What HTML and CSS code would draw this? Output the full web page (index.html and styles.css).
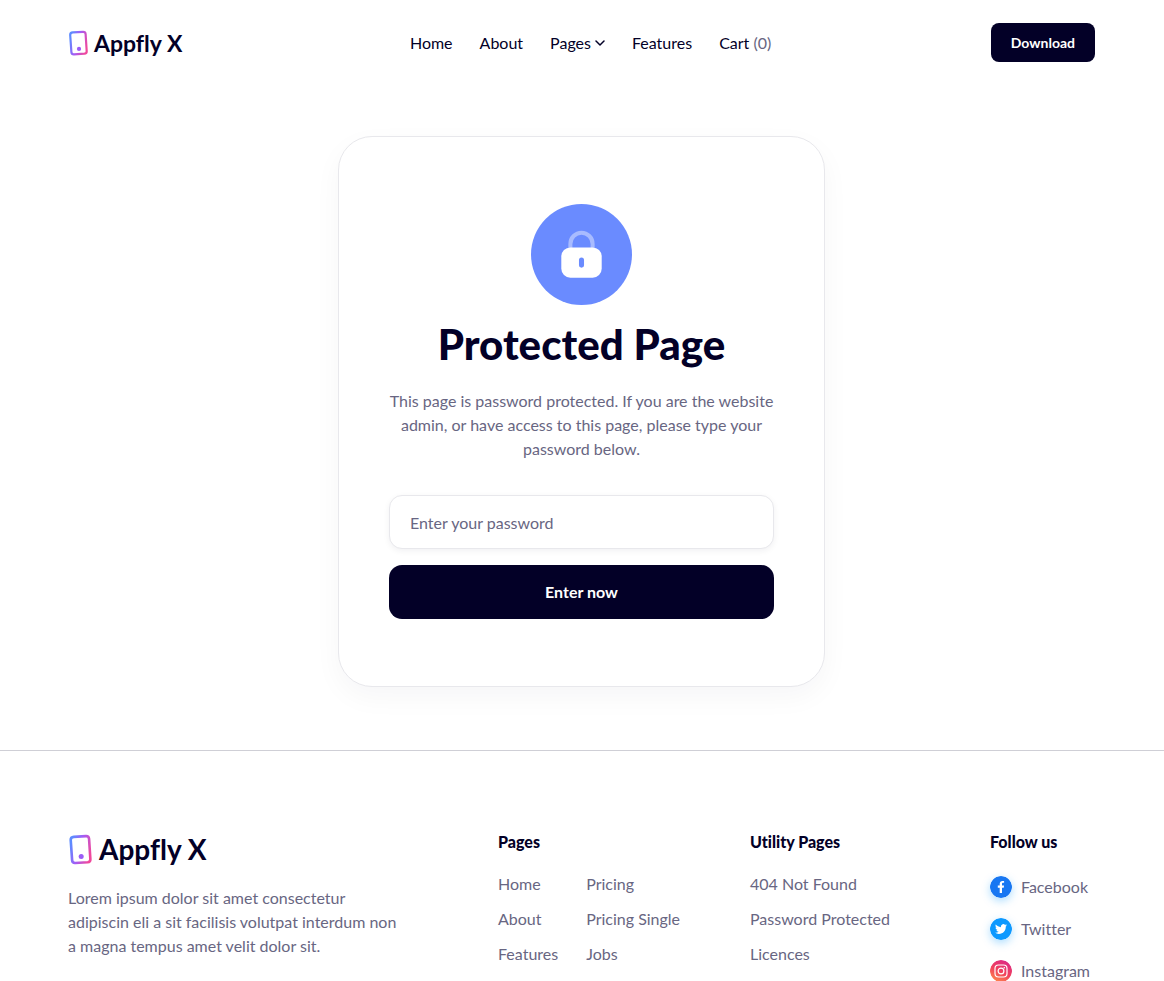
FILE: index.html
```html
<!DOCTYPE html>
<html lang="en">
<head>
<meta charset="utf-8">
<meta name="viewport" content="width=device-width, initial-scale=1">
<title>Protected Page - Appfly X</title>
<link rel="stylesheet" href="styles.css">
</head>
<body>
<header class="header">
  <a class="brand" href="#">
    <svg class="brand-icon" viewBox="0 0 20 26" aria-hidden="true">
      <defs>
        <linearGradient id="brand-gradient" x1="0" y1="0.3" x2="1" y2="0.7">
          <stop offset="0" stop-color="#5d8bff"/>
          <stop offset="0.45" stop-color="#a45cf5"/>
          <stop offset="1" stop-color="#f0489c"/>
        </linearGradient>
      </defs>
      <path d="M4.8 2.4 15 1.8Q17.4 1.7 17.6 4L18.7 21.2Q18.8 23.5 16.4 23.7L6 24.3Q3.6 24.4 3.4 22.1L2.2 5Q2.1 2.6 4.8 2.4Z" fill="none" stroke="url(#brand-gradient)" stroke-width="2.2"/>
      <circle cx="11" cy="18.9" r="2.1" fill="#9b5cf6"/>
    </svg>
    <span>Appfly X</span>
  </a>
  <nav class="nav" aria-label="Main">
    <a href="#">Home</a>
    <a href="#">About</a>
    <a class="nav-menu" href="#">Pages
      <svg class="chevron" viewBox="0 0 10 10" aria-hidden="true"><path d="M1 3l4 4 4-4" fill="none" stroke="currentColor" stroke-width="1.5" stroke-linecap="round" stroke-linejoin="round"/></svg>
    </a>
    <a href="#">Features</a>
    <a href="#">Cart <span class="count">(0)</span></a>
  </nav>
  <a class="download" href="#">Download</a>
</header>

<main class="main">
  <form class="card">
    <svg class="lock" viewBox="0 0 100 100" aria-hidden="true">
      <circle cx="50" cy="50" r="50" fill="#6a8bff"/>
      <path d="M39 44V39.5a11 11 0 0 1 22 0V44" fill="none" stroke="#a8bbff" stroke-width="4"/>
      <rect x="30" y="43" width="40" height="30" rx="9" fill="#fff"/>
      <rect x="47.5" y="53" width="5" height="10" rx="2.5" fill="#6a8bff"/>
    </svg>
    <h1 class="title">Protected Page</h1>
    <p class="message">This page is password protected. If you are the website admin, or have access to this page, please type your password below.</p>
    <input class="field" type="password" placeholder="Enter your password" aria-label="Password">
    <button class="submit" type="submit">Enter now</button>
  </form>
</main>

<footer class="footer">
  <div class="about">
    <a class="brand brand-large" href="#">
      <svg class="brand-icon" viewBox="0 0 20 26" aria-hidden="true">
        <path d="M4.8 2.4 15 1.8Q17.4 1.7 17.6 4L18.7 21.2Q18.8 23.5 16.4 23.7L6 24.3Q3.6 24.4 3.4 22.1L2.2 5Q2.1 2.6 4.8 2.4Z" fill="none" stroke="url(#brand-gradient)" stroke-width="2.2"/>
        <circle cx="11" cy="18.9" r="2.1" fill="#9b5cf6"/>
      </svg>
      <span>Appfly X</span>
    </a>
    <p class="about-text">Lorem ipsum dolor sit amet consectetur adipiscin eli a sit facilisis volutpat interdum non a magna tempus amet velit dolor sit.</p>
  </div>
  <section>
    <h2 class="heading">Pages</h2>
    <div class="columns">
      <ul class="links">
        <li><a href="#">Home</a></li>
        <li><a href="#">About</a></li>
        <li><a href="#">Features</a></li>
      </ul>
      <ul class="links">
        <li><a href="#">Pricing</a></li>
        <li><a href="#">Pricing Single</a></li>
        <li><a href="#">Jobs</a></li>
      </ul>
    </div>
  </section>
  <section>
    <h2 class="heading">Utility Pages</h2>
    <ul class="links">
      <li><a href="#">404 Not Found</a></li>
      <li><a href="#">Password Protected</a></li>
      <li><a href="#">Licences</a></li>
    </ul>
  </section>
  <section>
    <h2 class="heading">Follow us</h2>
    <ul class="social">
      <li><a href="#">
        <svg class="badge facebook" viewBox="0 0 22 22" aria-hidden="true"><circle cx="11" cy="11" r="11" fill="#1877f2"/><path d="M9.7 17v-5.3H7.8V9.5h1.9V7.9c0-2 1.1-3 2.9-3 .8 0 1.5.1 1.5.1v1.8h-.9c-.9 0-1.200.5-1.200 1.100v1.600h2.100l-.4 2.200H12V17z" fill="#fff"/></svg>
        Facebook</a></li>
      <li><a href="#">
        <svg class="badge twitter" viewBox="0 0 22 22" aria-hidden="true"><circle cx="11" cy="11" r="11" fill="#0d99ff"/><g transform="translate(5 5) scale(.5)"><path d="M23.950 4.570a10 10 0 0 1-2.820.77 4.960 4.960 0 0 0 2.160-2.720c-.95.56-2 .96-3.130 1.180a4.920 4.920 0 0 0-8.380 4.480C7.690 8.100 4.070 6.130 1.640 3.160a4.820 4.820 0 0 0-.67 2.480c0 1.710.87 3.210 2.190 4.100a4.900 4.900 0 0 1-2.230-.62v.06a4.920 4.920 0 0 0 3.950 4.830 5 5 0 0 1-2.210.08 4.940 4.940 0 0 0 4.600 3.420A9.870 9.870 0 0 1 0 19.540a13.990 13.990 0 0 0 7.550 2.210c9.050 0 14-7.500 14-13.980 0-.21 0-.42-.02-.63a9.940 9.940 0 0 0 2.420-2.570z" fill="#fff"/></g></svg>
        Twitter</a></li>
      <li><a href="#">
        <svg class="badge instagram" viewBox="0 0 22 22" aria-hidden="true"><defs><linearGradient id="instagram-gradient" x1="0.2" y1="1" x2="0.7" y2="0"><stop offset="0" stop-color="#ff8b4a"/><stop offset="0.5" stop-color="#f0415e"/><stop offset="1" stop-color="#dc2a86"/></linearGradient></defs><circle cx="11" cy="11" r="11" fill="url(#instagram-gradient)"/><rect x="5" y="5" width="12" height="12" rx="3.5" fill="none" stroke="#fff" stroke-width="1.2"/><circle cx="11" cy="11" r="2.9" fill="none" stroke="#fff" stroke-width="1.2"/><circle cx="14.3" cy="7.7" r=".8" fill="#fff"/></svg>
        Instagram</a></li>
    </ul>
  </section>
</footer>
</body>
</html>
```
FILE: styles.css
```css
* {
  box-sizing: border-box;
}

body {
  margin: 0;
  background: #fff;
  color: #030027;
  font-family: Lato, sans-serif;
  font-size: 16px;
  font-variant-ligatures: none;
  line-height: 24px;
}

a {
  color: inherit;
  text-decoration: none;
  white-space: nowrap;
}

h1,
h2,
p,
ul {
  margin: 0;
  padding: 0;
}

ul {
  list-style: none;
}

.header {
  display: flex;
  align-items: center;
  justify-content: space-between;
  padding: 23px 69px 23px 68px;
}

.brand {
  display: flex;
  align-items: center;
  gap: 6px;
  font-size: 23px;
  font-weight: 700;
}

.brand-icon {
  width: 20px;
  height: 26px;
}

.brand-large {
  gap: 7px;
  font-size: 28px;
  line-height: 31px;
}

.brand-large .brand-icon {
  width: 24px;
  height: 31px;
}

.nav {
  display: flex;
  gap: 27px;
  padding-left: 8px;
}

.nav-menu {
  display: flex;
  align-items: center;
  gap: 4px;
}

.chevron {
  width: 10px;
  height: 10px;
}

.count,
.message,
.about-text,
.links,
.social {
  color: #686682;
}

.download {
  padding: 8px 20px 7px;
  border-radius: 8px;
  background: #030027;
  color: #fff;
  font-size: 14px;
  font-weight: 700;
}

.main {
  display: flex;
  justify-content: center;
  padding: 51px 21px 63px 20px;
  border-bottom: 1px solid #cfcfd6;
}

.card {
  display: flex;
  flex-direction: column;
  align-items: center;
  width: 100%;
  max-width: 487px;
  padding: 67px 50px;
  border: 1px solid #e8e8ec;
  border-radius: 34px;
  background: #fff;
  box-shadow: 0 10px 28px rgba(20, 20, 43, 0.04);
}

.lock {
  width: 101px;
  height: 101px;
}

.title {
  margin-top: 13px;
  font-size: 42px;
  font-weight: 900;
  line-height: 52px;
}

.message {
  margin-top: 19px;
  text-align: center;
}

.field,
.submit {
  width: 100%;
  height: 54px;
  border-radius: 13px;
  font: inherit;
}

.field {
  margin-top: 34px;
  padding: 0 20px;
  border: 1px solid #e8e8ec;
  background: #fff;
  color: #030027;
  box-shadow: 0 2px 6px rgba(20, 20, 43, 0.06);
}

.field::placeholder {
  color: #686682;
  opacity: 1;
}

.submit {
  margin-top: 16px;
  border: 0;
  background: #030027;
  color: #fff;
  font-weight: 700;
}

.footer {
  display: grid;
  grid-template-columns: 430fr 252fr 240fr 105fr;
  padding: 79px 69px 0 68px;
}

.about {
  padding-top: 4px;
}

.about-text {
  max-width: 340px;
  margin-top: 21px;
}

.heading {
  font-size: 16px;
  font-weight: 900;
  line-height: 24px;
}

.columns {
  display: flex;
  gap: 28px;
}

.links {
  display: grid;
  gap: 11px;
  margin-top: 18px;
}

.social {
  display: grid;
  gap: 18px;
  margin-top: 21px;
}

.social a {
  display: flex;
  align-items: center;
  gap: 9px;
}

.badge {
  width: 22px;
  height: 22px;
  border-radius: 50%;
}

.facebook,
.twitter {
  box-shadow: 0 3px 8px rgba(24, 160, 255, 0.35);
}
```
